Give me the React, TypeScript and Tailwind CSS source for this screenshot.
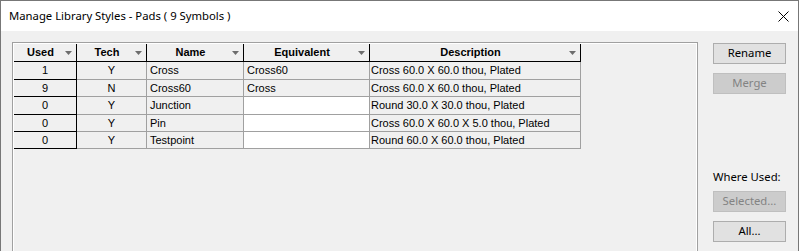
import React from "react";

interface Row {
  used: string;
  tech: string;
  name: string;
  equivalent: string;
  description: string;
  height: string;
}

const rows: Row[] = [
  { used: "1", tech: "Y", name: "Cross", equivalent: "Cross60", description: "Cross 60.0 X 60.0 thou, Plated", height: "h-[18px]" },
  { used: "9", tech: "N", name: "Cross60", equivalent: "Cross", description: "Cross 60.0 X 60.0 thou, Plated", height: "h-[17px]" },
  { used: "0", tech: "Y", name: "Junction", equivalent: "", description: "Round 30.0 X 30.0 thou, Plated", height: "h-[18px]" },
  { used: "0", tech: "Y", name: "Pin", equivalent: "", description: "Cross 60.0 X 60.0 X 5.0 thou, Plated", height: "h-[17px]" },
  { used: "0", tech: "Y", name: "Testpoint", equivalent: "", description: "Round 60.0 X 60.0 thou, Plated", height: "h-[17px]" },
];

const DropArrow = () => (
  <svg width="7" height="4" viewBox="0 0 7 4" className="absolute right-[4px] top-[7px]">
    <polygon points="0,0 7,0 3.5,4" fill="#6d6d6d" />
  </svg>
);

const HeaderCell = ({ label, className }: { label: string; className: string }) => (
  <div className={`relative flex items-center justify-center border-r border-b border-black font-bold pr-[9px] ${className}`}>
    {label}
    <DropArrow />
  </div>
);

const Button = ({ children, disabled }: { children: React.ReactNode; disabled?: boolean }) => (
  <div
    className={`h-[21px] w-[73px] flex items-center justify-center border ${
      disabled ? "bg-[#cccccc] border-[#bfbfbf] text-[#838383]" : "bg-[#e1e1e1] border-[#adadad] text-black"
    }`}
  >
    {children}
  </div>
);

export default function App() {
  return (
    <div
      className="w-[799px] h-[251px] overflow-hidden border-l border-t border-r border-[#777777] bg-[#f0f0f0] flex flex-col"
      style={{ fontFamily: '"Noto Sans", sans-serif' }}
    >
      <div className="h-[30px] shrink-0 bg-white flex items-center justify-between pl-[8px] pr-[9px] text-[11.3px] text-black">
        <span>Manage Library Styles - Pads ( 9 Symbols )</span>
        <svg width="11" height="11" viewBox="0 0 11 11">
          <path d="M0.5 0.5 L10.5 10.5 M10.5 0.5 L0.5 10.5" stroke="#000" strokeWidth="1" />
        </svg>
      </div>

      <div className="flex flex-1 pt-[11px] pl-[11px] pr-[12px]">
        <div className="w-[686px] border-l border-t border-r border-[#a0a0a0]">
          <div className="h-full border-l border-t border-r border-white">
            <div className="text-[11px] text-black" style={{ fontFamily: '"Liberation Sans", Arial, sans-serif' }}>
              <div className="flex h-[18px]">
                <HeaderCell label="Used" className="w-[63px]" />
                <HeaderCell label="Tech" className="w-[70px]" />
                <HeaderCell label="Name" className="w-[97px]" />
                <HeaderCell label="Equivalent" className="w-[126px]" />
                <HeaderCell label="Description" className="w-[211px]" />
              </div>
              {rows.map((r) => (
                <div key={r.name} className={`flex ${r.height}`}>
                  <div className="w-[63px] flex items-center justify-center border-r border-b border-black">{r.used}</div>
                  <div className="w-[70px] flex items-center justify-center border-r border-b border-[#a0a0a0]">{r.tech}</div>
                  <div className="w-[97px] flex items-center pl-[3px] border-r border-b border-[#a0a0a0]">{r.name}</div>
                  <div
                    className={`w-[126px] flex items-center pl-[3px] border-r border-b border-[#a0a0a0] ${
                      r.equivalent ? "" : "bg-white"
                    }`}
                  >
                    {r.equivalent}
                  </div>
                  <div className="w-[211px] flex items-center pl-[1px] border-r border-b border-[#a0a0a0]">{r.description}</div>
                </div>
              ))}
            </div>
          </div>
        </div>

        <div className="ml-[15px] pt-[1px] flex flex-col text-[11.3px]">
          <Button>Rename</Button>
          <div className="mt-[9px]">
            <Button disabled>Merge</Button>
          </div>
          <div className="mt-[75px] h-[16px] leading-[16px] text-black">Where Used:</div>
          <div className="mt-[6px]">
            <Button disabled>Selected...</Button>
          </div>
          <div className="mt-[9px]">
            <Button>All...</Button>
          </div>
        </div>
      </div>
    </div>
  );
}
